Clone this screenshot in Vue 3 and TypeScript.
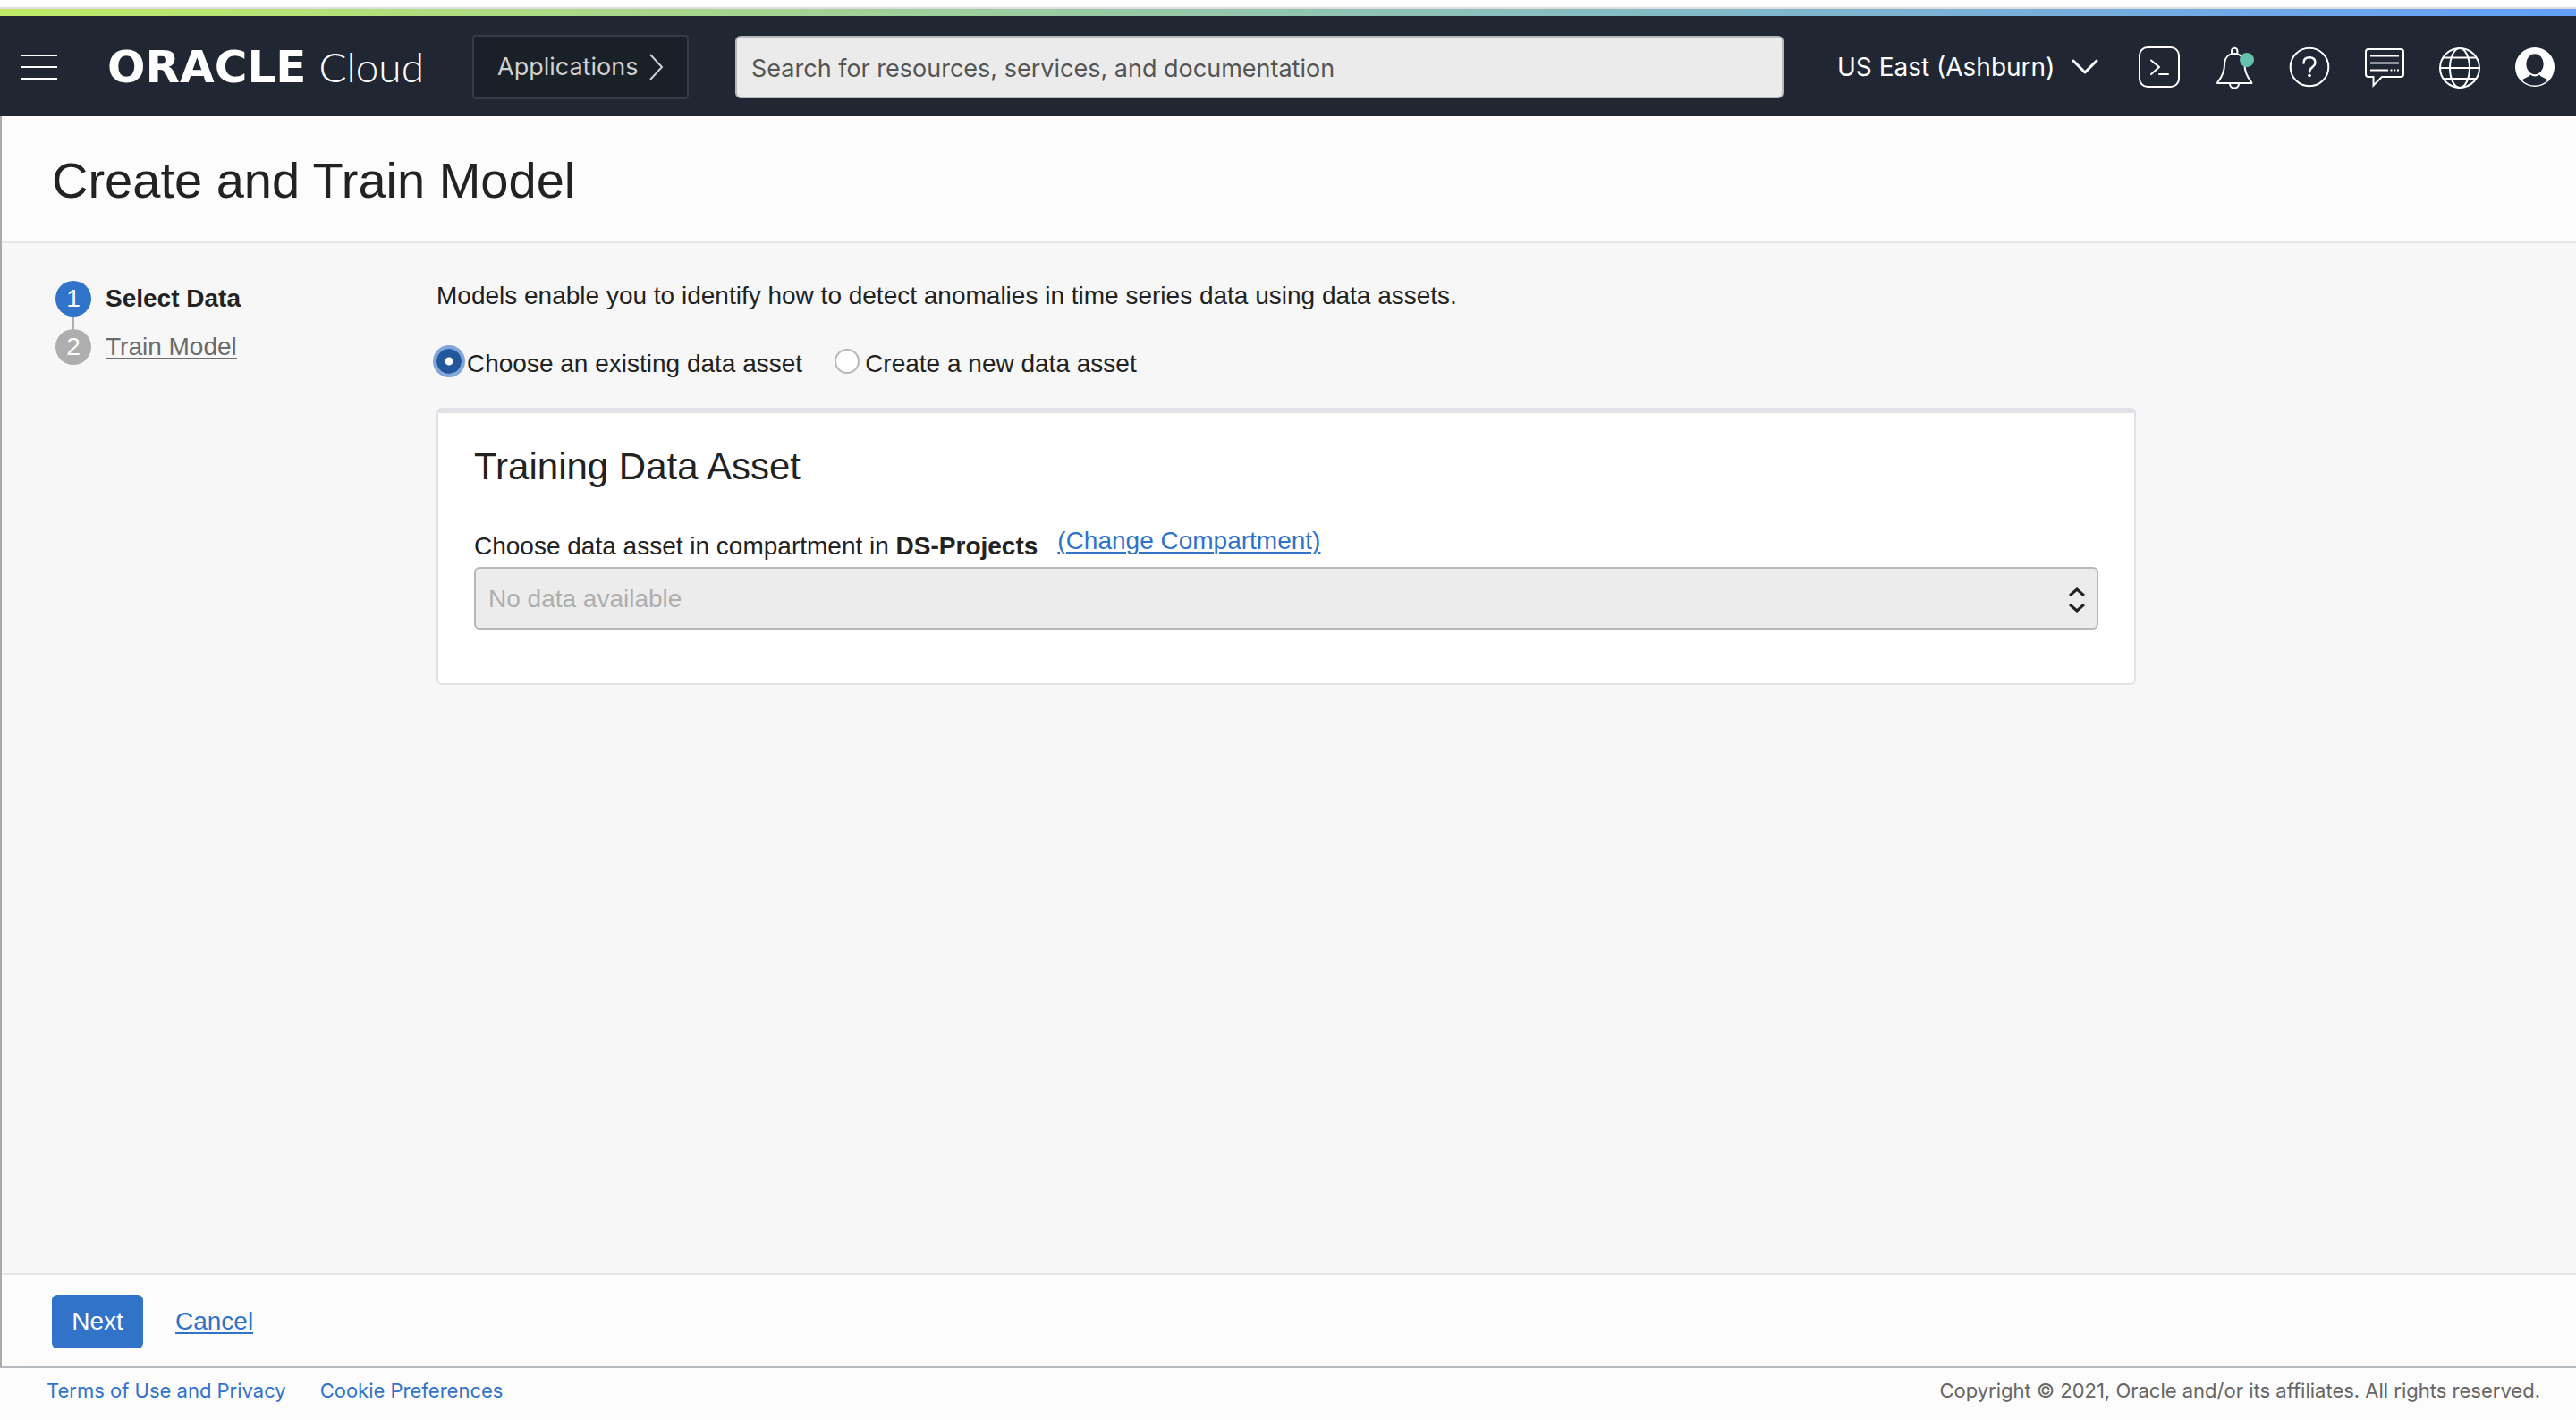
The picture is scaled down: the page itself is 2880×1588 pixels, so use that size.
<script setup lang="ts">
import { ref } from 'vue'

interface Step {
  number: number
  label: string
}

const steps: Step[] = [
  { number: 1, label: 'Select Data' },
  { number: 2, label: 'Train Model' },
]

const currentStep = ref(1)
const source = ref<'existing' | 'new'>('existing')
const search = ref('')
</script>

<template>
  <div class="page">
    <div class="window-edge"></div>
    <div class="accent"></div>

    <header class="topbar">
      <button class="icon-button menu" type="button" aria-label="Navigation menu">
        <svg width="40" height="28" viewBox="0 0 40 28" stroke="currentColor" stroke-width="2">
          <path d="M0 1h40M0 14h40M0 27h40" />
        </svg>
      </button>

      <a class="brand" href="#">
        <span class="brand-name">ORACLE</span>
        <span class="brand-product">Cloud</span>
      </a>

      <button class="applications" type="button">
        Applications
        <svg width="16" height="30" viewBox="0 0 16 30" fill="none" stroke="currentColor" stroke-width="2">
          <path d="M1 1l13 14L1 29" />
        </svg>
      </button>

      <input
        v-model="search"
        class="search"
        type="search"
        aria-label="Search"
        placeholder="Search for resources, services, and documentation"
      />

      <button class="region" type="button">
        US East (Ashburn)
        <svg width="30" height="18" viewBox="0 0 30 18" fill="none" stroke="currentColor" stroke-width="3" stroke-linecap="round" stroke-linejoin="round">
          <path d="M2 2l13 13L28 2" />
        </svg>
      </button>

      <nav class="tools" aria-label="Tools">
        <button class="icon-button" type="button" aria-label="Developer tools">
          <svg viewBox="0 0 48 48" fill="none" stroke="currentColor" stroke-width="2">
            <rect x="2" y="2" width="44" height="44" rx="9" />
            <path d="M15 16.500l9 7.500-9 8M24 32h10" stroke-linejoin="round" stroke-linecap="round" />
          </svg>
        </button>
        <button class="icon-button" type="button" aria-label="Announcements">
          <svg viewBox="0 0 48 48" fill="none" stroke="currentColor" stroke-width="2" stroke-linejoin="round">
            <path d="M21 9V6a3.200 3.200 0 0 1 6.400 0v3" />
            <path d="M5 42c0-2 7.500-7 8-20 0-8.500 4.500-13 11-13s11.500 4.500 11.500 13C36 35 43.500 40 43.500 42z" />
            <path d="M19 42.500a5 5 0 0 0 10 0" />
            <circle cx="38" cy="16" r="8" fill="#66c3ab" stroke="none" />
          </svg>
        </button>
        <button class="icon-button" type="button" aria-label="Help">
          <svg viewBox="0 0 48 48" fill="none" stroke="currentColor" stroke-width="2">
            <circle cx="24" cy="24" r="21.300" />
            <path d="M17.500 19.500c0-4 2.500-6.200 6.500-6.200s6.500 2.200 6.500 6c0 5-6.500 4.500-6.500 10.200" stroke-width="2.400" stroke-linecap="round" />
            <circle cx="24" cy="33.500" r="1.800" fill="currentColor" stroke="none" />
          </svg>
        </button>
        <button class="icon-button" type="button" aria-label="Feedback">
          <svg viewBox="0 0 48 48" fill="none" stroke="currentColor" stroke-width="2">
            <path d="M6 4h36a3 3 0 0 1 3 3v25a3 3 0 0 1-3 3H21l-9.500 9.500V35H6a3 3 0 0 1-3-3V7a3 3 0 0 1 3-3z" />
            <path d="M8 11.500h32M8 19.500h32M8 27.500h20M30.500 27.500h2M34.300 27.500h2M38 27.500h2" />
          </svg>
        </button>
        <button class="icon-button" type="button" aria-label="Language">
          <svg viewBox="0 0 48 48" fill="none" stroke="currentColor" stroke-width="2">
            <circle cx="24" cy="25" r="22" />
            <ellipse cx="24" cy="25" rx="11" ry="22" />
            <path d="M2 25h44M6 13.500h36M6 37h36" />
          </svg>
        </button>
        <button class="icon-button" type="button" aria-label="Profile">
          <svg viewBox="0 0 48 48">
            <circle cx="24" cy="24" r="22" fill="currentColor" />
            <path d="M9.500 38.500c4-3 8.500-3.500 9.500-6q5 4 10 0c1 2.500 5.500 3 9.500 6a20.700 20.700 0 0 1-29 0z" fill="#202733" />
            <ellipse cx="24" cy="20.700" rx="9.700" ry="11.500" fill="#202733" />
          </svg>
        </button>
      </nav>
    </header>

    <main class="workspace">
      <div class="title-bar">
        <h1>Create and Train Model</h1>
      </div>

      <div class="content">
        <ol class="steps">
          <li v-for="step in steps" :key="step.number" class="step" :class="{ active: step.number === currentStep }">
            <span class="step-number">{{ step.number }}</span>
            <strong v-if="step.number === currentStep">{{ step.label }}</strong>
            <a v-else href="#" @click.prevent="currentStep = step.number">{{ step.label }}</a>
          </li>
        </ol>

        <form id="model-form" class="form" @submit.prevent>
          <p class="intro">Models enable you to identify how to detect anomalies in time series data using data assets.</p>

          <div class="choices" role="radiogroup" aria-label="Data asset source">
            <label class="choice">
              <input v-model="source" type="radio" name="source" value="existing" />
              Choose an existing data asset
            </label>
            <label class="choice">
              <input v-model="source" type="radio" name="source" value="new" />
              Create a new data asset
            </label>
          </div>

          <section class="card">
            <h2>Training Data Asset</h2>
            <div class="field-head">
              <label for="asset">Choose data asset in compartment in <strong>DS-Projects</strong></label>
              <a href="#">(Change Compartment)</a>
            </div>
            <div class="select-wrap">
              <select id="asset" disabled>
                <option>No data available</option>
              </select>
              <svg width="18" height="30" viewBox="0 0 18 30" fill="none" stroke="#222222" stroke-width="3" aria-hidden="true">
                <path d="M1 10l8-7 8 7M1 20l8 7 8-7" />
              </svg>
            </div>
          </section>
        </form>
      </div>

      <div class="actions">
        <button class="next" type="submit" form="model-form">Next</button>
        <a href="#">Cancel</a>
      </div>
    </main>

    <footer class="footer">
      <nav class="legal" aria-label="Legal">
        <a href="#">Terms of Use and Privacy</a>
        <a href="#">Cookie Preferences</a>
      </nav>
      <span>Copyright © 2021, Oracle and/or its affiliates. All rights reserved.</span>
    </footer>
  </div>
</template>

<style>
body {
  margin: 0;
}
</style>

<style scoped>
* {
  box-sizing: border-box;
}

.page {
  display: flex;
  flex-direction: column;
  min-height: 100vh;
  background: #fcfcfc;
  color: #222222;
  font-family: "Liberation Sans", Arial, sans-serif;
  font-size: 28px;
  line-height: 34px;
}

button,
input,
select {
  font: inherit;
}

h1,
h2,
p,
ol {
  margin: 0;
  padding: 0;
  font-weight: 400;
}

a {
  color: #3073c9;
  text-decoration-thickness: 2px;
  text-underline-offset: 3px;
}

.window-edge {
  height: 10px;
  background: #ffffff;
  border-bottom: 2px solid #dddde0;
}

.accent {
  height: 8px;
  background: linear-gradient(90deg, #c0ea66, #64a0fa);
}

.topbar {
  display: flex;
  align-items: center;
  height: 112px;
  padding: 2px 22px 0 24px;
  background: #202733;
  color: #ffffff;
  font-family: Inter, "Liberation Sans", sans-serif;
  font-size: 27px;
}

.icon-button {
  display: flex;
  flex: none;
  width: 48px;
  height: 48px;
  padding: 0;
  border: 0;
  background: none;
  color: inherit;
}

.menu {
  align-items: center;
  width: 40px;
}

.brand {
  display: flex;
  align-items: baseline;
  justify-content: space-between;
  flex: none;
  width: 354px;
  margin: 0 54px 0 56px;
  color: #ffffff;
  line-height: 48px;
  text-decoration: none;
}

.brand-name {
  font-family: "DejaVu Sans", sans-serif;
  font-size: 50px;
  font-weight: 700;
}

.brand-product {
  font-family: Lato, sans-serif;
  font-size: 46px;
  font-weight: 300;
}

.applications {
  display: flex;
  align-items: center;
  justify-content: space-between;
  flex: none;
  width: 242px;
  height: 72px;
  margin-right: 52px;
  padding: 0 26px;
  border: 2px solid #343b46;
  border-radius: 4px;
  background: #1a2027;
  color: #d0d0d0;
}

.search {
  flex: 1;
  min-width: 0;
  height: 70px;
  padding: 2px 16px 0;
  border: 2px solid #b4b9be;
  border-radius: 6px;
  background: #ebebeb;
  color: #222222;
}

.search::placeholder {
  color: #555555;
  opacity: 1;
}

.region {
  display: flex;
  align-items: center;
  justify-content: space-between;
  flex: none;
  width: 292px;
  margin: 0 44px 0 60px;
  padding: 0;
  border: 0;
  background: none;
  color: inherit;
  font-size: 28px;
  white-space: nowrap;
}

.tools {
  display: flex;
  gap: 36px;
}

.tools svg {
  width: 48px;
  height: 48px;
}

.workspace {
  display: flex;
  flex-direction: column;
  flex: 1;
  border-left: 2px solid #aaaaaa;
  border-bottom: 2px solid #b4b9be;
}

.title-bar {
  padding: 40px 56px 36px;
  border-bottom: 2px solid #e6e6e6;
}

h1 {
  font-size: 56px;
  line-height: 64px;
}

.content {
  display: flex;
  flex: 1;
  padding: 42px 60px;
  background: #f7f7f7;
}

.steps {
  display: flex;
  flex-direction: column;
  flex: none;
  gap: 14px;
  width: 426px;
  list-style: none;
}

.step {
  position: relative;
  display: flex;
  gap: 16px;
  line-height: 40px;
}

.step + .step::before {
  position: absolute;
  bottom: 100%;
  left: 19px;
  width: 2px;
  height: 14px;
  background: #aeaeae;
  content: "";
}

.step a {
  color: #6b6b6b;
}

.step-number {
  width: 40px;
  height: 40px;
  border-radius: 50%;
  background: #aeaeae;
  color: #ffffff;
  text-align: center;
}

.active .step-number {
  background: #3073c9;
}

.form {
  flex: 1;
  max-width: 1900px;
}

.choices {
  display: flex;
  gap: 32px;
  margin-top: 38px;
}

.choice {
  display: flex;
  gap: 2px;
  line-height: 42px;
}

.choice input {
  flex: none;
  width: 28px;
  height: 28px;
  margin: 4px;
  border: 2px solid #b4b9be;
  border-radius: 50%;
  appearance: none;
  background: #ffffff;
}

.choice:first-child {
  margin-left: -4px;
}

.choice input:checked {
  border: 0;
  background: radial-gradient(circle, #ffffff 4px, #22589b 5px);
  box-shadow: 0 0 0 4px #80a6dc;
}

.card {
  margin-top: 28px;
  padding: 36px 40px 60px;
  border: 2px solid #e1e2e7;
  border-top-width: 6px;
  border-radius: 6px;
  background: #ffffff;
}

h2 {
  font-size: 42px;
  line-height: 48px;
}

.field-head {
  display: flex;
  gap: 22px;
  height: 40px;
  margin: 42px 0 6px;
}

.field-head label {
  align-self: flex-end;
}

.select-wrap {
  position: relative;
}

select {
  display: block;
  width: 100%;
  height: 70px;
  padding: 2px 14px 0;
  border: 2px solid #b4b9be;
  border-radius: 6px;
  appearance: none;
  background: #ececec;
  color: #aeaeae;
  opacity: 1;
}

.select-wrap svg {
  position: absolute;
  top: 22px;
  right: 15px;
  pointer-events: none;
}

.actions {
  display: flex;
  align-items: center;
  gap: 36px;
  padding: 22px 56px 20px;
  border-top: 2px solid #e6e6e6;
}

.next {
  width: 102px;
  height: 60px;
  padding: 0;
  border: 0;
  border-radius: 6px;
  background: #3073c9;
  color: #ffffff;
}

.footer {
  display: flex;
  justify-content: space-between;
  padding: 8px 40px 16px 52px;
  color: #666666;
  font-family: Inter, "Liberation Sans", sans-serif;
  font-size: 22px;
}

.legal {
  display: flex;
  gap: 38px;
}

.legal a {
  text-decoration: none;
}
</style>
